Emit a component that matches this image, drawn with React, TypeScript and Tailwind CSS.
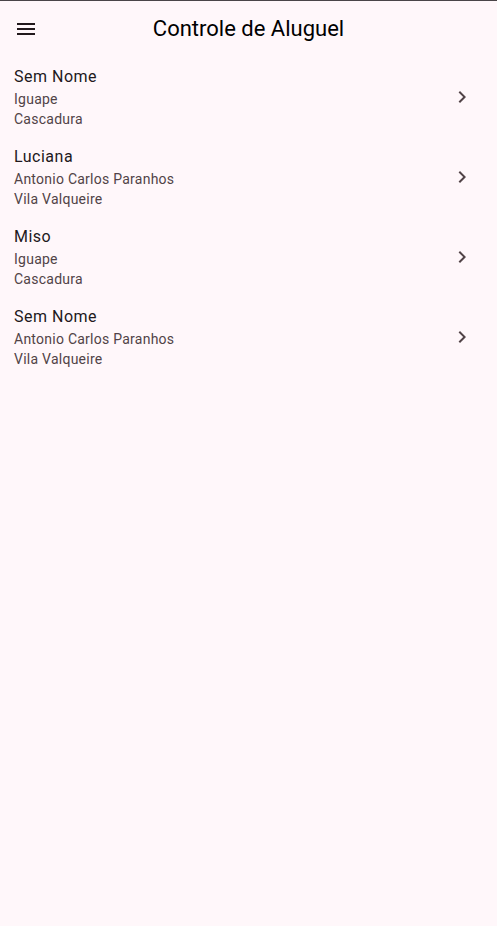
import React from "react";

type Rental = { id: number; name: string; street: string; district: string };

const rentals: Rental[] = [
  { id: 1, name: "Sem Nome", street: "Iguape", district: "Cascadura" },
  { id: 2, name: "Luciana", street: "Antonio Carlos Paranhos", district: "Vila Valqueire" },
  { id: 3, name: "Miso", street: "Iguape", district: "Cascadura" },
  { id: 4, name: "Sem Nome", street: "Antonio Carlos Paranhos", district: "Vila Valqueire" },
];

function MenuIcon() {
  return (
    <svg viewBox="0 0 24 24" className="size-6" fill="currentColor" aria-hidden="true">
      <path d="M3 18h18v-2H3v2zm0-5h18v-2H3v2zm0-7v2h18V6H3z" />
    </svg>
  );
}

function ChevronIcon() {
  return (
    <svg viewBox="0 0 24 24" className="size-6" fill="currentColor" aria-hidden="true">
      <path d="M10 6 8.590 7.410 13.170 12l-4.580 4.590L10 18l6-6z" />
    </svg>
  );
}

function RentalRow({ rental }: { rental: Rental }) {
  return (
    <li>
      <button type="button" className="flex w-full items-center justify-between py-2 pr-[23px] pl-3.5 text-left">
        <span className="flex flex-col">
          <span className="text-base leading-6 tracking-[0.5px] text-[#22191c]">{rental.name}</span>
          <span className="text-sm leading-5 tracking-[0.25px] text-[#514347]">{rental.street}</span>
          <span className="text-sm leading-5 tracking-[0.25px] text-[#514347]">{rental.district}</span>
        </span>
        <span className="text-[#514347]">
          <ChevronIcon />
        </span>
      </button>
    </li>
  );
}

export default function App() {
  return (
    <div className="min-h-screen border-t border-[#4a4548] bg-[#fff7fa] font-['Roboto',sans-serif]">
      <header className="grid h-14 grid-cols-[56px_1fr_56px] items-center">
        <button type="button" aria-label="Abrir menu" className="flex size-12 items-center justify-center pl-1 text-[#22191c]">
          <MenuIcon />
        </button>
        <h1 className="text-center text-[22px] leading-7 text-black">Controle de Aluguel</h1>
      </header>
      <main>
        <ul>
          {rentals.map((rental) => (
            <RentalRow key={rental.id} rental={rental} />
          ))}
        </ul>
      </main>
    </div>
  );
}
